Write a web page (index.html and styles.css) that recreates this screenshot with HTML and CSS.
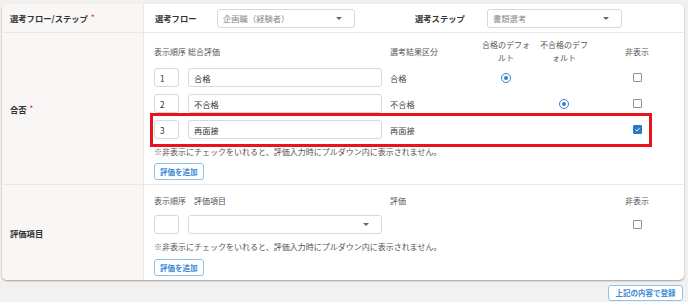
FILE: index.html
```html
<!DOCTYPE html>
<html lang="ja">
<head>
<meta charset="utf-8">
<title>選考フロー</title>
<link rel="stylesheet" href="styles.css">
</head>
<body>
<div class="page">
  <div class="card">
    <div class="row row-flow">
      <div class="label"><span>選考フロー/ステップ<span class="req">*</span></span></div>
      <div class="content flow">
        <span class="flow-label w1">選考フロー</span>
        <div class="select s1"><span class="select-text">企画職（経験者）</span><span class="caret"></span></div>
        <span class="flow-label w2">選考ステップ</span>
        <div class="select s2"><span class="select-text">書類選考</span><span class="caret"></span></div>
      </div>
    </div>

    <div class="row">
      <div class="label"><span>合否<span class="req">*</span></span></div>
      <div class="content sec2">
        <div class="grid head">
          <div class="nowrap">表示順序</div>
          <div>総合評価</div>
          <div>選考結果区分</div>
          <div class="center">合格のデフォ<br>ルト</div>
          <div class="center">不合格のデフ<br>ォルト</div>
          <div class="center">非表示</div>
        </div>
        <div class="grid item">
          <div class="input small">1</div>
          <div class="input">合格</div>
          <div class="cat">合格</div>
          <div class="center"><span class="radio on"></span></div>
          <div class="center"></div>
          <div class="center"><span class="check"></span></div>
        </div>
        <div class="grid item">
          <div class="input small">2</div>
          <div class="input">不合格</div>
          <div class="cat">不合格</div>
          <div class="center"></div>
          <div class="center"><span class="radio on"></span></div>
          <div class="center"><span class="check"></span></div>
        </div>
        <div class="grid item highlight">
          <div class="input small">3</div>
          <div class="input">再面接</div>
          <div class="cat">再面接</div>
          <div class="center"></div>
          <div class="center"></div>
          <div class="center"><span class="check checked"><svg viewBox="0 0 10 10" width="9" height="9"><path d="M2.2 5.2 L4.2 7.1 L7.9 3.1" fill="none" stroke="#fff" stroke-width="1.4"/></svg></span></div>
        </div>
        <p class="note">※非表示にチェックをいれると、評価入力時にプルダウン内に表示されません。</p>
        <button class="btn">評価を追加</button>
      </div>
    </div>

    <div class="row last">
      <div class="label"><span>評価項目</span></div>
      <div class="content sec3">
        <div class="grid head3">
          <div class="nowrap">表示順序</div>
          <div class="h-item">評価項目</div>
          <div>評価</div>
          <div></div>
          <div></div>
          <div class="center">非表示</div>
        </div>
        <div class="grid item">
          <div class="input small"></div>
          <div class="select wide"><span class="select-text"></span><span class="caret"></span></div>
          <div></div>
          <div></div>
          <div></div>
          <div class="center"><span class="check"></span></div>
        </div>
        <p class="note">※非表示にチェックをいれると、評価入力時にプルダウン内に表示されません。</p>
        <button class="btn">評価を追加</button>
      </div>
    </div>
  </div>
  <div class="actions">
    <button class="btn submit">上記の内容で登録</button>
  </div>
</div>
</body>
</html>
```

FILE: styles.css
```css
*, *::before, *::after { box-sizing: border-box; }

body {
  margin: 0;
  background: #f2f1ef;
  font-family: "Noto Sans CJK JP", "Noto Sans", sans-serif;
  font-size: 8.3px;
  color: #333;
}

.page {
  padding: 4px 4px 0 2px;
}

.card {
  width: 682px;
  background: #fff;
  border-radius: 5px;
  box-shadow: 0 1px 2px rgba(0, 0, 0, 0.35);
  overflow: hidden;
}

.row {
  display: grid;
  grid-template-columns: 142px 1fr;
  border-bottom: 1px solid #e9e8e6;
}

.row.last { border-bottom: none; }

.label {
  background: #f8f7f5;
  border-right: 1px solid #e9e8e6;
  padding-left: 8px;
  display: flex;
  align-items: center;
  font-weight: 700;
  color: #333;
}

.req {
  color: #e5414a;
  font-size: 7px;
  margin-left: 3px;
  position: relative;
  top: -2px;
}

.content {
  padding-left: 10px;
}

.flow {
  display: flex;
  align-items: center;
  height: 28px;
  padding-left: 11px;
}

.flow-label {
  font-weight: 700;
}

.w1 { width: 62px; }
.w2 { width: 72px; margin-left: 60px; }

.select {
  height: 19px;
  border: 1px solid #d8d8d8;
  border-radius: 3px;
  display: flex;
  align-items: center;
  justify-content: space-between;
  padding: 0 12px 0 5px;
  background: #fff;
}

.s1 { width: 138px; }
.s2 { width: 135px; }
.wide { width: 194px; }

.select-text {
  color: #888;
}

.caret {
  width: 0;
  height: 0;
  border-left: 3px solid transparent;
  border-right: 3px solid transparent;
  border-top: 3.5px solid #666;
}

.sec2 { padding-top: 5px; padding-bottom: 4px; }
.sec3 { padding-top: 10px; padding-bottom: 4px; }

.grid {
  display: grid;
  grid-template-columns: 34px 202px 86px 60px 56px 90px;
  align-items: center;
}

.head, .head3 {
  color: #555;
  font-size: 8px;
}

.head { line-height: 13px; margin-bottom: 4px; }
.head3 { line-height: 12px; margin-bottom: 8px; }

.nowrap { white-space: nowrap; }
.h-item { padding-left: 6px; }

.item { height: 19px; margin-bottom: 7px; }

.input {
  width: 194px;
  height: 19px;
  border: 1px solid #d8d8d8;
  border-radius: 3px;
  padding-left: 5px;
  display: flex;
  align-items: center;
  color: #333;
  background: #fff;
}

.input.small { width: 25px; }

.cat { color: #444; }

.center {
  display: flex;
  justify-content: center;
  align-items: center;
  text-align: center;
}
.head .center, .head3 .center { display: block; }

.radio {
  width: 10px;
  height: 10px;
  border-radius: 50%;
  border: 1.4px solid #2d7fd3;
  display: inline-flex;
  align-items: center;
  justify-content: center;
}
.radio.on::after {
  content: "";
  width: 4px;
  height: 4px;
  border-radius: 50%;
  background: #2d7fd3;
}

.check {
  width: 9px;
  height: 9px;
  border: 1px solid #909090;
  border-radius: 1px;
  display: inline-flex;
  align-items: center;
  justify-content: center;
  background: #fff;
}
.check.checked {
  background: #2a78cc;
  border-color: #2a78cc;
}

.highlight {
  position: relative;
  margin-bottom: 0;
}
.highlight::after {
  content: "";
  position: absolute;
  left: -4px;
  top: -7px;
  width: 502px;
  height: 34px;
  border: 3px solid #e8141d;
  pointer-events: none;
}

.sec3 .item { margin-bottom: 0; }

.note {
  margin: 7px 0 0;
  line-height: 12px;
  font-size: 8px;
  color: #555;
}

.btn {
  display: block;
  margin-top: 5px;
  height: 17px;
  padding: 0 5px;
  border: 1px solid #8fc2ec;
  border-radius: 3px;
  background: #fff;
  color: #3a8ad6;
  font-family: inherit;
  font-size: 7.5px;
  font-weight: 700;
  line-height: 15px;
}

.sec3 .btn { margin-top: 6px; }

.actions {
  display: flex;
  justify-content: flex-end;
  padding-top: 5px;
  padding-right: 1px;
}

.submit {
  margin-top: 0;
  height: 16px;
  width: 75px;
  padding: 0;
  line-height: 14px;
}
```
